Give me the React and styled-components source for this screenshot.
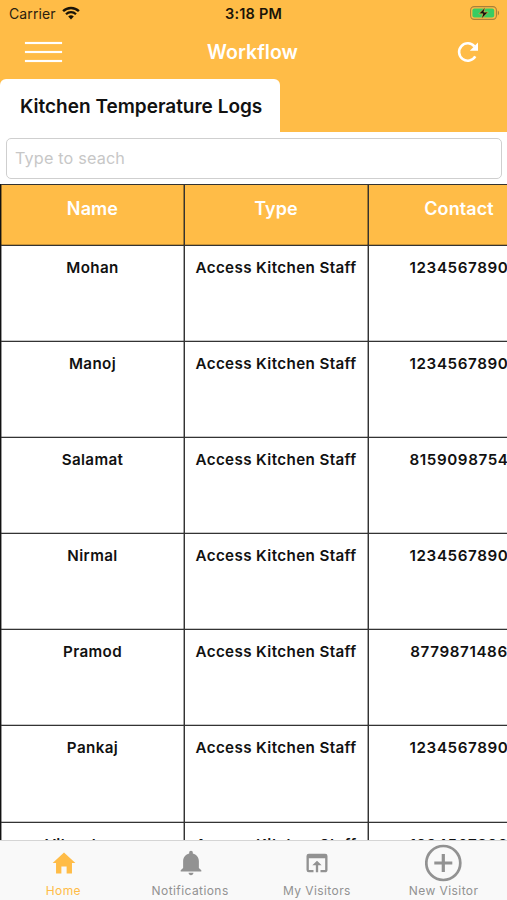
import React from "react";
import styled, { createGlobalStyle } from "styled-components";
import { IoMdHome, IoMdNotifications } from "react-icons/io";
import { MdOpenInBrowser } from "react-icons/md";

const GlobalStyle = createGlobalStyle`
  * { box-sizing: border-box; }
  body { margin: 0; background: #fff; overflow: hidden; }
`;

const amber = "#ffbc47";

const Screen = styled.div`
  width: 507px;
  height: 900px;
  display: flex;
  flex-direction: column;
  overflow: hidden;
  background: #fff;
  color: #111;
  font-family: Inter, "Liberation Sans", sans-serif;
`;

const Header = styled.header`
  flex: none;
  height: 132px;
  display: flex;
  flex-direction: column;
  background: ${amber};
`;

const StatusBar = styled.div`
  height: 26px;
  padding: 0 7px 0 9px;
  display: grid;
  grid-template-columns: 1fr auto 1fr;
  align-items: center;
`;

const Carrier = styled.div`
  display: flex;
  align-items: center;
  gap: 6px;
  font-size: 14px;
  letter-spacing: 0.1px;
  color: #2b210f;
`;

const Clock = styled.div`
  font-size: 14.5px;
  font-weight: 600;
  letter-spacing: 0.2px;
  margin-right: 2px;
  color: #1a1408;
`;

const BatteryIcon = styled.svg`
  justify-self: end;
`;

const NavBar = styled.nav`
  height: 53px;
  padding: 0 27px 1px 25px;
  display: grid;
  grid-template-columns: 1fr auto 1fr;
  align-items: center;
  color: #fff;
`;

const MenuButton = styled.button`
  width: 37px;
  height: 20px;
  padding: 0;
  border: 0;
  background: none;
  display: flex;
  flex-direction: column;
  justify-content: space-between;
`;

const MenuLine = styled.span`
  height: 2px;
  width: 37px;
  background: #fff;
  box-shadow: 0 0 1px rgba(255, 255, 255, 0.8);
`;

const Title = styled.h1`
  margin: 0;
  font-size: 19.5px;
  font-weight: 600;
  letter-spacing: 0.05px;
`;

const RefreshButton = styled.button`
  justify-self: end;
  width: 24px;
  height: 24px;
  padding: 0;
  border: 0;
  background: none;
  color: #fff;
  display: flex;
`;

const ActiveTab = styled.div`
  width: 280px;
  height: 53px;
  padding: 1px 0 0 20px;
  display: flex;
  align-items: center;
  border-radius: 6px 6px 0 0;
  background: #fff;
  font-size: 19px;
  font-weight: 600;
  white-space: nowrap;
`;

const SearchArea = styled.div`
  flex: none;
  height: 52px;
  padding: 6px 5px 0 6px;
`;

const SearchInput = styled.input`
  display: block;
  width: 100%;
  height: 41px;
  padding: 0 8px 2px;
  border: 1px solid #cfcfcf;
  border-radius: 5px;
  outline: 0;
  background: #fff;
  font-family: inherit;
  font-size: 16.2px;
  letter-spacing: 0.17px;
  &::placeholder { color: #c7c7c7; opacity: 1; }
`;

const TableViewport = styled.div`
  flex: 1;
  min-height: 0;
  overflow: hidden;
`;

const Table = styled.div`
  width: 552px;
  border-left: 1px solid #111;
`;

const Row = styled.div`
  display: grid;
  grid-template-columns: 184px 184px 183px;
  height: ${(p) => (p.$head ? "61px" : "96.1px")};
  border-top: 1px solid #333;
  background: ${(p) => (p.$head ? amber : "#fff")};
  box-shadow: inset 1px 0 rgba(0, 0, 0, 0.4), 0 -1px rgba(0, 0, 0, 0.22);
`;

const Cell = styled.div`
  padding-top: ${(p) => (p.$head ? "11px" : "12px")};
  border-right: 1px solid #333;
  box-shadow: inset -1px 0 rgba(0, 0, 0, 0.36);
  text-align: center;
  white-space: nowrap;
  color: ${(p) => (p.$head ? "#fff" : "#111")};
  font-size: ${(p) => (p.$head ? "18px" : "15.2px")};
  font-weight: 600;
  line-height: ${(p) => (p.$head ? "25px" : "20px")};
  letter-spacing: ${(p) => (p.$head ? "0.1px" : p.$numeric ? "0.6px" : "0.38px")};
  &:nth-child(2) { padding-right: 1px; }
  &:nth-child(3) { padding-right: 2px; }
`;

const BottomBar = styled.nav`
  flex: none;
  height: 60px;
  display: grid;
  grid-template-columns: repeat(4, 1fr);
  border-top: 1px solid #d5d5d5;
  background: #f9f9f9;
`;

const BottomItem = styled.button`
  padding: 3px 0 0;
  border: 0;
  background: none;
  display: flex;
  flex-direction: column;
  align-items: center;
  gap: 1px;
  font-family: inherit;
  font-size: 12px;
  line-height: 16px;
  letter-spacing: 0.42px;
  white-space: nowrap;
  color: ${(p) => (p.$active ? amber : "#929292")};
`;

const IconBox = styled.span`
  height: 38px;
  padding-left: 1px;
  display: flex;
  align-items: center;
  justify-content: center;
`;

const rows = [
  ["Mohan", "1234567890"],
  ["Manoj", "1234567890"],
  ["Salamat", "8159098754"],
  ["Nirmal", "1234567890"],
  ["Pramod", "8779871486"],
  ["Pankaj", "1234567890"],
  ["Vikas kumar", "1234567890"],
];

const Wifi = () => (
  <svg width="18" height="14" viewBox="0 0 18 14" fill="none" stroke="#1a1408">
    <path d="M1.1 5.2a11.2 11.2 0 0 1 15.8 0" strokeWidth="2.4" />
    <path d="M4 8.2a7.1 7.1 0 0 1 10 0" strokeWidth="2.2" />
    <path d="M9 13.4 6.2 10.6a4 4 0 0 1 5.6 0Z" fill="#1a1408" stroke="none" />
  </svg>
);

const Battery = () => (
  <BatteryIcon width="30" height="14" viewBox="0 0 30 14">
    <rect x="0.6" y="0.6" width="25.8" height="12.8" rx="3.6" fill="none" stroke="#a9803a" strokeWidth="1.1" />
    <path d="M27.8 4.6c1.7.7 1.7 4.1 0 4.8Z" fill="#a9803a" />
    <rect x="2.4" y="2.4" width="21.8" height="9.2" rx="2" fill="#38cc62" />
    <path d="M15.3 1.2 8.8 7.8h4l-1.4 5.2 6.8-6.9h-4.3Z" fill="#111" stroke={amber} strokeWidth="0.6" />
  </BatteryIcon>
);

const Refresh = () => (
  <svg width="24" height="24" viewBox="0 0 24 24">
    <path d="M18.4 6.3A8.7 8.7 0 1 0 19.3 16.4" fill="none" stroke="currentColor" strokeWidth="2.6" />
    <path d="M22 2.6V10.8H13.8Z" fill="currentColor" />
  </svg>
);

const AddCircle = () => (
  <svg width="38" height="38" viewBox="0 0 38 38" fill="none" stroke="#929292">
    <circle cx="18.3" cy="19" r="17" strokeWidth="2.7" />
    <path d="M9.3 19h18M18.3 10v18" strokeWidth="3.2" />
  </svg>
);

const tabs = [
  ["Home", <IoMdHome size={28} />],
  ["Notifications", <IoMdNotifications size={30} />],
  ["My Visitors", <MdOpenInBrowser size={28} />],
  ["New Visitor", <AddCircle />],
];

export default function App() {
  return (
    <Screen>
      <GlobalStyle />
      <Header>
        <StatusBar>
          <Carrier>Carrier <Wifi /></Carrier>
          <Clock>3:18 PM</Clock>
          <Battery />
        </StatusBar>
        <NavBar>
          <MenuButton aria-label="Menu">
            <MenuLine />
            <MenuLine />
            <MenuLine />
          </MenuButton>
          <Title>Workflow</Title>
          <RefreshButton aria-label="Refresh"><Refresh /></RefreshButton>
        </NavBar>
        <ActiveTab>Kitchen Temperature Logs</ActiveTab>
      </Header>
      <SearchArea>
        <SearchInput placeholder="Type to seach" />
      </SearchArea>
      <TableViewport>
        <Table>
          <Row $head>
            <Cell $head>Name</Cell>
            <Cell $head>Type</Cell>
            <Cell $head>Contact</Cell>
          </Row>
          {rows.map(([name, contact]) => (
            <Row key={name}>
              <Cell>{name}</Cell>
              <Cell>Access Kitchen Staff</Cell>
              <Cell $numeric>{contact}</Cell>
            </Row>
          ))}
        </Table>
      </TableViewport>
      <BottomBar>
        {tabs.map(([label, icon]) => (
          <BottomItem key={label} $active={label === "Home"}>
            <IconBox>{icon}</IconBox>
            {label}
          </BottomItem>
        ))}
      </BottomBar>
    </Screen>
  );
}
